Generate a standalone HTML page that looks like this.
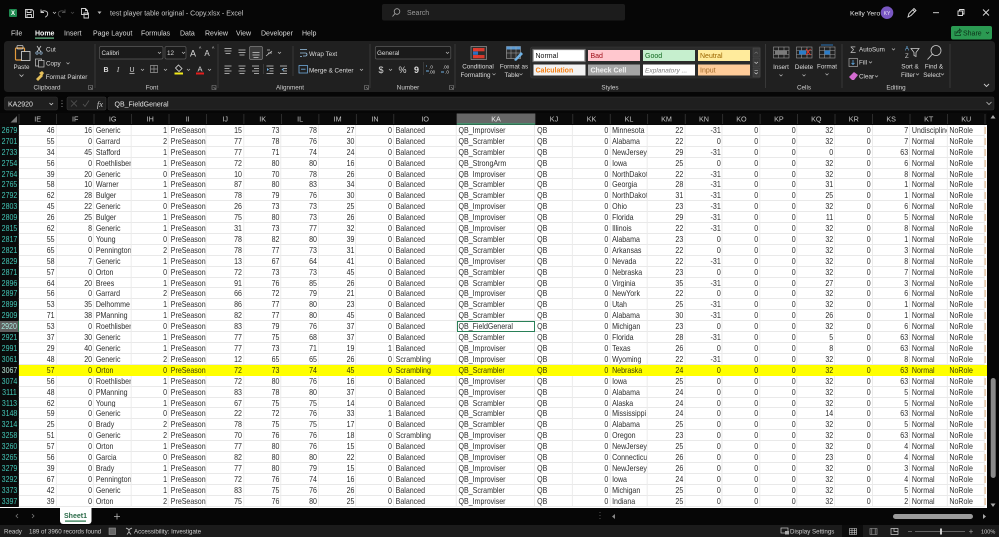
<!DOCTYPE html>
<html><head><meta charset="utf-8"><title>test player table original - Copy.xlsx - Excel</title>
<style>
html,body{margin:0;padding:0;width:999px;height:537px;overflow:hidden;background:#060606}
svg{position:absolute;left:0;top:0}
svg text{font-family:"Liberation Sans",sans-serif;fill:#dcdcdc;font-size:6.3px}
.c{text-anchor:middle}
.h{font-size:7.2px;fill:#c4c4c4;text-anchor:middle}
#wrap{position:absolute;left:0;top:124.9px;width:987px;height:383.5px;overflow:hidden;background:#fff}
table{display:block;border:0;border-spacing:0;width:1148px;transform:scaleX(.86);transform-origin:0 0;font:8.2px/12.2px "Liberation Sans",sans-serif;color:#2c2c2c}
tbody{display:block}
tr{display:grid;height:10.92px;grid-template-columns:22.09px repeat(10,43.58px) 73.14px 91.4px repeat(12,43.58px) 4px;}
tr::after{content:"";display:block;background:linear-gradient(#fff 2px,#dca56c 2px,#dca56c 9px,#fff 9px) 0 0/1.2px 100% no-repeat}
td{display:block;padding:0 1.2px;box-sizing:border-box;text-align:right;white-space:nowrap;overflow:hidden;height:10.92px;border-right:1px solid #e9e9e9;border-bottom:1px solid #e9e9e9}
td:first-child{background:#0a0a0a;color:#43c6b6;text-align:center;border:0;padding:0}
td:nth-child(4),td:nth-child(6),td:nth-child(12),td:nth-child(13),td:nth-child(14),td:nth-child(16),td:nth-child(24),td:nth-child(25){text-align:left;padding-left:2.2px;padding-right:0}
tr.y{background:#ff0;color:#3a3a00}
tr.y td{border-color:#ff0}
tr.y td:first-child{color:#b9e8d8}
tr.y::after{background:none}
tr.s td:first-child{background:#5f5f5f;color:#a8ece0;border-right:1px solid #217346}
#sel{position:absolute;left:456.6px;top:320.8px;width:78.6px;height:11.4px;box-sizing:border-box;border:1.2px solid #2a8058}
</style></head><body>
<svg width="999" height="537" viewBox="0 0 999 537">
<rect width="999" height="537" fill="#060606"/>
<!-- title bar -->
<rect x="9" y="9" width="8" height="8" rx="1" fill="#1e8a50"/><text x="13" y="15.2" class="c" style="font-size:6px;font-weight:bold;fill:#fff">X</text>
<g fill="none" stroke="#cfcfcf" stroke-width=".9">
<path d="M25.500 9.500h6.500l1.500 1.500v6.500h-8zM27 9.500v3h4v-3M27 17.500v-3h4.500v3"/>
<path d="M41 9.500v3h3M41.200 12.300c2-2.500 6.500-1.500 6.500 1.500 0 1.500-1 2.600-2.500 3.400"/>
<path d="M53 12l1.500 1.500 1.500-1.500" stroke-width=".7"/>
<path d="M65 9.500v3h-3M64.800 12.300c-2-2.500-6.500-1.500-6.500 1.500 0 1.500 1 2.600 2.500 3.400" stroke="#4d4d4d"/>
<path d="M71 12l1.500 1.500 1.500-1.500" stroke="#4d4d4d" stroke-width=".7"/>
<path d="M81.500 8.500h4l2 2v4h-6zM85.500 8.500v2h2M84 13h4.500v5H84z"/>
</g>
<path d="M97.500 11.500h4l-2 2.500z" fill="#bbb"/>
<text x="110" y="15.500" style="font-size:7px;fill:#c8c8c8">test player table original - Copy.xlsx  -  Excel</text>
<rect x="382" y="4" width="243" height="16.500" rx="2" fill="#1c1c1c"/>
<circle cx="397" cy="11.500" r="2.800" fill="none" stroke="#aaa" stroke-width=".8"/><path d="M395 13.500l-2.500 3" stroke="#aaa" stroke-width=".8"/>
<text x="407" y="15" style="font-size:7px;fill:#9a9a9a">Search</text>
<text x="850" y="15.500" style="font-size:6.800px;fill:#e4e4e4">Kelly Yero</text>
<circle cx="887" cy="12.700" r="6.300" fill="#7957c2"/><text x="887" y="14.800" class="c" style="font-size:5px;fill:#e6e0f5">KY</text>
<path d="M908 17l1-3.500 5-5 2 2-5 5zM912.500 9.500l2 2" fill="none" stroke="#ddd" stroke-width=".9"/>
<path d="M933 12.700h6" stroke="#ddd" stroke-width=".9"/>
<path d="M958 11h4.500v4.500H958zM959.500 11V9.500h4.500V14h-1.500" fill="none" stroke="#ddd" stroke-width=".9"/>
<path d="M983 9.500l6 6M989 9.500l-6 6" stroke="#ddd" stroke-width=".9"/>
<!-- tabs -->
<g style="font-size:7px">
<text x="11" y="35.500" style="font-size:7px">File</text>
<text x="35" y="35.500" style="font-size:7px;font-weight:bold;fill:#fff">Home</text>
<text x="64" y="35.500" style="font-size:7px">Insert</text>
<text x="93" y="35.500" style="font-size:7px">Page Layout</text>
<text x="141" y="35.500" style="font-size:7px">Formulas</text>
<text x="180" y="35.500" style="font-size:7px">Data</text>
<text x="205" y="35.500" style="font-size:7px">Review</text>
<text x="236" y="35.500" style="font-size:7px">View</text>
<text x="261" y="35.500" style="font-size:7px">Developer</text>
<text x="302" y="35.500" style="font-size:7px">Help</text>
</g>
<rect x="35" y="37.500" width="19" height="1.200" fill="#6fc28f"/>
<rect x="951" y="26" width="41" height="13.500" rx="2" fill="#2b9a52"/>
<path d="M955 31v4.500h5.500v-1.500M956.500 33c.4-1.600 1.500-2.500 3-2.500V29l2 2-2 2v-1.200c-1.500 0-2.200.4-3 1.200z" fill="none" stroke="#0f3a1f" stroke-width=".7"/>
<text x="963" y="35.500" style="font-size:7px;fill:#0c2f18">Share</text>
<path d="M986 32l1.500 1.500 1.500-1.500" fill="none" stroke="#0f3a1f" stroke-width=".8"/>
<!-- ribbon panel -->
<rect x="4" y="41" width="991" height="51" rx="3.500" fill="#202020"/>
<g stroke="#3f3f3f" stroke-width=".8">
<path d="M95 44v44M218 44v44M370 44v44M455 44v44M765.500 44v44M842 44v44M950 44v44"/>
<path d="M293 46v30"/><path d="M423.500 62v13"/><path d="M263.500 64v10"/>
</g>
<!-- clipboard -->
<rect x="15.500" y="48" width="9" height="12" rx="1" fill="none" stroke="#e29a3c" stroke-width="1.200"/>
<rect x="17" y="45.500" width="6" height="3.500" rx="1" fill="none" stroke="#ccc" stroke-width=".8"/>
<rect x="21.500" y="51.500" width="8.500" height="9" fill="#202020" stroke="#ddd" stroke-width=".8"/>
<text x="21.500" y="69" class="c">Paste</text>
<path d="M19.500 74.500l2 2 2-2" fill="none" stroke="#bbb" stroke-width=".8"/>
<path d="M37 46l4 6M41 46l-4 6" stroke="#ccc" stroke-width=".8"/><circle cx="37" cy="53" r="1.200" fill="none" stroke="#9fc4e4" stroke-width=".7"/><circle cx="41" cy="53" r="1.200" fill="none" stroke="#9fc4e4" stroke-width=".7"/>
<text x="46" y="51.500">Cut</text>
<rect x="35.500" y="59" width="6" height="7" fill="none" stroke="#ccc" stroke-width=".7"/><rect x="38.500" y="60.500" width="5.500" height="6.500" fill="#202020" stroke="#ccc" stroke-width=".7"/>
<text x="46" y="65.300">Copy</text><path d="M66.500 62.500l1.500 1.500 1.500-1.500" fill="none" stroke="#bbb" stroke-width=".7"/>
<path d="M36 79l5-5 2 2-5 5zM39 73l3-2 2 2-2 3z" fill="#e4bf5a"/>
<text x="45.700" y="79">Format Painter</text>
<text x="47" y="89.500" class="c" style="fill:#cfcfcf">Clipboard</text>
<path d="M88.500 85.500h4v4h-4zM90 87l2 2" fill="none" stroke="#888" stroke-width=".6"/>
<!-- font -->
<g fill="#1a1a1a" stroke="#5a5a5a" stroke-width=".7">
<rect x="99.500" y="46.500" width="63.500" height="12.500" rx="1.500"/><rect x="165" y="46.500" width="21" height="12.500" rx="1.500"/>
<rect x="375.300" y="46.500" width="75.500" height="12.500" rx="1.500"/>
</g>
<text x="101.500" y="55">Calibri</text><text x="167" y="55">12</text><text x="377" y="55">General</text>
<g fill="none" stroke="#bbb" stroke-width=".7"><path d="M158 52l1.500 1.500 1.500-1.500M182 52l1.500 1.500 1.500-1.500M446 52l1.500 1.500 1.500-1.500"/></g>
<text x="193" y="56.500" class="c" style="font-size:9px">A</text><text x="199" y="50.500" style="font-size:5px">^</text>
<text x="207" y="56" class="c" style="font-size:8px">A</text><text x="212" y="50.500" style="font-size:5px">^</text>
<text x="106" y="72" class="c" style="font-size:7px;font-weight:bold">B</text>
<text x="118" y="72" class="c" style="font-size:7px;font-style:italic;font-family:'Liberation Serif',serif">I</text>
<text x="132" y="72" class="c" style="font-size:7px;text-decoration:underline">U</text>
<path d="M141 69l1.500 1.500 1.500-1.500M164 69l1.500 1.500 1.500-1.500M187 69l1.500 1.500 1.500-1.500M208 69l1.500 1.500 1.500-1.500" fill="none" stroke="#bbb" stroke-width=".7"/>
<path d="M150.500 65.500h7v7h-7zM154 65.500v7M150.500 69h7" fill="none" stroke="#999" stroke-width=".7"/>
<path d="M178.500 65l3.500 3.500-3 3-3.500-3.500z" fill="none" stroke="#ddd" stroke-width=".8"/>
<rect x="174.500" y="72.500" width="8.500" height="2" fill="#f2ea1a"/>
<text x="200" y="71.500" class="c" style="font-size:7.500px">A</text>
<rect x="196" y="72.500" width="8" height="2" fill="#e31d1d"/>
<text x="152" y="89.500" class="c" style="fill:#cfcfcf">Font</text>
<path d="M212 85.500h4v4h-4zM213.500 87l2 2" fill="none" stroke="#888" stroke-width=".6"/>
<!-- alignment -->
<rect x="249.500" y="46.500" width="13" height="13" rx="1.500" fill="#3a3a3a" stroke="#808080" stroke-width=".7"/>
<g stroke="#d0d0d0" stroke-width=".8" fill="none">
<path d="M224.500 48.500h7M224.500 51h7M225.500 53.500h5"/>
<path d="M238.500 50h7M238.500 52.500h7M239.500 55h5"/>
<path d="M252.500 52.500h7M252.500 55h7M253.500 57.500h5"/>
<path d="M266 56l6-5M267 50h3M268 53h4" stroke="#c8c8c8"/>
<path d="M224.500 66h7M224.500 68.500h5M224.500 71h7M224.500 73.500h5"/>
<path d="M238.500 66h7M239.500 68.500h5M238.500 71h7M239.500 73.500h5"/>
<path d="M252 66h7M254 68.500h5M252 71h7M254 73.500h5"/>
<path d="M266.500 66h7M269.500 68.500h4M269.500 71h4M266.500 73.500h7"/>
<path d="M280 66h7M283 68.500h4M283 71h4M280 73.500h7"/>
</g>
<path d="M278 52l1.500 1.500 1.500-1.500" fill="none" stroke="#bbb" stroke-width=".7"/>
<path d="M267 68l2 1.500-2 1.500zM283.500 68l-2 1.500 2 1.500z" fill="#6fb2e6"/>
<path d="M300 49.500h7M300 53h5.500a1.500 1.500 0 0 1 0 3H303M300 56.500h2" fill="none" stroke="#9ac3e4" stroke-width=".8"/>
<text x="309" y="55.800">Wrap Text</text>
<rect x="299" y="65.500" width="8.500" height="7.500" fill="none" stroke="#6fa8d8" stroke-width=".8"/><path d="M301 69.200h4.500" stroke="#6fa8d8" stroke-width=".9"/>
<text x="309" y="72.300">Merge &amp; Center</text>
<path d="M360 69l1.500 1.500 1.500-1.500" fill="none" stroke="#bbb" stroke-width=".7"/>
<text x="290" y="89.500" class="c" style="fill:#cfcfcf">Alignment</text>
<path d="M364.500 85.500h4v4h-4zM366 87l2 2M449.500 85.500h4v4h-4zM451 87l2 2" fill="none" stroke="#888" stroke-width=".6"/>
<!-- number -->
<text x="381" y="73" class="c" style="font-size:9px">$</text>
<path d="M389 69l1.500 1.500 1.500-1.500" fill="none" stroke="#bbb" stroke-width=".7"/>
<text x="402.500" y="73" class="c" style="font-size:9px">%</text>
<text x="416.500" y="73" class="c" style="font-size:9px;font-weight:bold">9</text>
<text x="431" y="68.500" class="c" style="font-size:4.500px">.0</text><text x="432" y="73.500" class="c" style="font-size:4.500px">.00</text>
<text x="446" y="68.500" class="c" style="font-size:4.500px">.00</text><text x="447" y="73.500" class="c" style="font-size:4.500px">.0</text>
<path d="M427 66h-1M429 71h-3M441 72h3" stroke="#6fb2e6" stroke-width=".9"/>
<text x="408" y="89.500" class="c" style="fill:#cfcfcf">Number</text>
<!-- conditional / table -->
<rect x="471" y="46.500" width="15.500" height="13" fill="#2d2d2d" stroke="#aaa" stroke-width=".6"/>
<rect x="473" y="48" width="5" height="3.300" fill="#e03a2e"/><rect x="478" y="48" width="6.500" height="3.300" fill="#d8392d"/><rect x="473" y="51.500" width="5" height="3.300" fill="#2b6fc4"/><rect x="473" y="55" width="5" height="3.300" fill="#e03a2e"/><rect x="478" y="55" width="6.500" height="3.300" fill="#d8392d"/>
<text x="478" y="68.500" class="c">Conditional</text><text x="475.500" y="77" class="c">Formatting</text>
<path d="M492.500 73.500l1.500 1.500 1.500-1.500" fill="none" stroke="#bbb" stroke-width=".6"/>
<rect x="506.500" y="46.500" width="14" height="12" fill="#2d2d2d" stroke="#aaa" stroke-width=".6"/>
<rect x="506.500" y="46.500" width="14" height="3" fill="#5b9bd5"/>
<path d="M511 46.500v12M516 46.500v12M506.500 53h14" stroke="#aaa" stroke-width=".5"/>
<path d="M514 60l7-8 2 2-7 7z" fill="#6fb2e6"/>
<text x="514" y="68.500" class="c">Format as</text><text x="512" y="77" class="c">Table</text>
<path d="M519.500 73.500l1.500 1.500 1.500-1.500" fill="none" stroke="#bbb" stroke-width=".6"/>
<!-- styles -->
<rect x="530.500" y="47" width="230" height="31" rx="2" fill="#2b2b2b" stroke="#3a3a3a" stroke-width=".6"/>
<rect x="533" y="49.500" width="52" height="12" fill="#fff" stroke="#777" stroke-width="1.200"/>
<rect x="588" y="50" width="52" height="11" fill="#ffc7ce"/>
<rect x="643" y="50" width="52" height="11" fill="#c6efce"/>
<rect x="698" y="50" width="52" height="11" fill="#ffeb9c"/>
<rect x="533.500" y="64.500" width="52" height="11" fill="#f2f2f2"/>
<rect x="588" y="64.500" width="52" height="11" fill="#a5a5a5"/>
<rect x="643" y="64.500" width="52" height="11" fill="#fff"/>
<rect x="698" y="64.500" width="52" height="11" fill="#fc9"/>
<text x="535.500" y="58" style="font-size:7px;fill:#111">Normal</text>
<text x="590.500" y="58" style="font-size:7px;fill:#a0101a">Bad</text>
<text x="645" y="58" style="font-size:7px;fill:#11691f">Good</text>
<text x="700" y="58" style="font-size:7px;fill:#9c6500">Neutral</text>
<text x="535.500" y="72.500" style="font-size:7px;fill:#f57e10;font-weight:bold">Calculation</text>
<text x="590.500" y="72.500" style="font-size:7px;fill:#f2f2f2;font-weight:bold">Check Cell</text>
<text x="645" y="72.500" style="font-size:6.600px;fill:#7f7f7f;font-style:italic">Explanatory ...</text>
<text x="700" y="72.500" style="font-size:7px;fill:#a06a2a">Input</text>
<g fill="#3a3a3a" stroke="#555" stroke-width=".4"><rect x="753" y="48" width="6.500" height="9"/><rect x="753" y="58" width="6.500" height="9"/><rect x="753" y="68" width="6.500" height="9"/></g>
<path d="M754.500 53.500l1.700-1.500 1.700 1.500" fill="none" stroke="#777" stroke-width=".6"/>
<path d="M754.500 62l1.700 1.500 1.700-1.500M754.500 72.500l1.700 1.500 1.700-1.500M754.500 70.500h3.400" fill="none" stroke="#ddd" stroke-width=".6"/>
<text x="610" y="89.500" class="c" style="fill:#cfcfcf">Styles</text>
<!-- cells -->
<g fill="none" stroke="#9a9a9a" stroke-width=".6">
<rect x="773.500" y="47" width="15.500" height="11"/><path d="M773.500 50.500h15.500M773.500 54.500h15.500M778.500 47v11M784 47v11"/>
<rect x="796.500" y="47" width="15.500" height="11"/><path d="M796.500 50.500h15.500M796.500 54.500h15.500M801.500 47v11M807 47v11"/>
<rect x="819.500" y="47" width="15.500" height="11"/><path d="M819.500 50.500h15.500M819.500 54.500h15.500M824.500 47v11M830 47v11"/>
</g>
<rect x="775" y="50.500" width="12" height="4" fill="#7a7a7a"/>
<rect x="799" y="50.500" width="7" height="4" fill="#2b7cc8"/><path d="M806 49l4.500 6M810.500 49l-4.500 6" stroke="#e0352c" stroke-width="1"/>
<rect x="824.500" y="50.500" width="5.500" height="4" fill="#2b7cc8"/><path d="M821 45h12" stroke="#2b7cc8" stroke-width=".9"/>
<text x="781" y="69" class="c">Insert</text><text x="804" y="69" class="c">Delete</text><text x="827" y="68.500" class="c">Format</text>
<path d="M779.500 74.500l1.500 1.500 1.500-1.500M802.500 74.500l1.500 1.500 1.500-1.500M825.500 73.500l1.500 1.500 1.500-1.500" fill="none" stroke="#bbb" stroke-width=".7"/>
<text x="804" y="89.500" class="c" style="fill:#cfcfcf">Cells</text>
<!-- editing -->
<text x="853" y="53" class="c" style="font-size:9.500px;fill:#bbb">Σ</text>
<text x="859" y="51.500">AutoSum</text><path d="M892 48.500l1.500 1.500 1.500-1.500" fill="none" stroke="#bbb" stroke-width=".7"/>
<rect x="849" y="58.500" width="8.500" height="8" fill="none" stroke="#aaa" stroke-width=".7"/><path d="M853 60v4.500M851.500 63l1.500 1.500 1.500-1.500" fill="none" stroke="#5fa8e0" stroke-width=".8"/>
<text x="859" y="64.500">Fill</text><path d="M869 61.500l1.500 1.500 1.500-1.500" fill="none" stroke="#bbb" stroke-width=".7"/>
<path d="M849 77l5-5 4 3-4 5h-2z" fill="#d36bd0"/>
<text x="859" y="78.500">Clear</text><path d="M875 75.500l1.500 1.500 1.500-1.500" fill="none" stroke="#bbb" stroke-width=".7"/>
<text x="905" y="50.500" style="font-size:6px;fill:#6fb2e6">A</text><text x="905" y="58" style="font-size:6px;fill:#ccc">Z</text>
<path d="M911 48.500h8l-3 4v4l-2-1v-3z" fill="none" stroke="#ccc" stroke-width=".8"/>
<text x="910" y="68.500" class="c">Sort &amp;</text><text x="908" y="77" class="c">Filter</text><path d="M916 73.500l1.500 1.500 1.500-1.500" fill="none" stroke="#bbb" stroke-width=".7"/>
<circle cx="936" cy="50.500" r="5" fill="none" stroke="#ccc" stroke-width=".8"/><path d="M932.500 54l-5 5.500" stroke="#ccc" stroke-width=".9"/>
<text x="934" y="68.500" class="c">Find &amp;</text><text x="932" y="77" class="c">Select</text><path d="M941 73.500l1.500 1.500 1.500-1.500" fill="none" stroke="#bbb" stroke-width=".7"/>
<text x="896" y="89.500" class="c" style="fill:#cfcfcf">Editing</text>
<path d="M984 84l2.500 2.500L989 84" fill="none" stroke="#ccc" stroke-width=".9"/>
<!-- formula bar -->
<rect x="4.500" y="97" width="53" height="13" rx="1.500" fill="#1f1f1f" stroke="#333" stroke-width=".5"/>
<text x="8" y="106.300" style="font-size:7px;fill:#e4e4e4">KA2920</text>
<path d="M49.500 103l1.800 1.800 1.800-1.800" fill="none" stroke="#ccc" stroke-width=".8"/>
<path d="M62 100.500v.8M62 103.300v.8M62 106v.8" stroke="#bbb" stroke-width=".9"/>
<rect x="67" y="97" width="39" height="13" rx="1.500" fill="#1f1f1f" stroke="#3a3a3a" stroke-width=".5"/>
<path d="M71 100.500l6 6M77 100.500l-6 6M83 104l2 2.500 4-6" fill="none" stroke="#555" stroke-width=".8"/>
<text x="100" y="107" class="c" style="font-family:'Liberation Serif',serif;font-style:italic;font-size:8.500px;fill:#ccc">fx</text>
<rect x="108" y="97" width="886" height="13" rx="1.500" fill="#1f1f1f" stroke="#333" stroke-width=".5"/>
<text x="114.500" y="106.300" style="font-size:7px;fill:#e4e4e4">QB_FieldGeneral</text>
<path d="M986.500 102l2.500 2.500 2.500-2.500" fill="none" stroke="#bbb" stroke-width=".8"/>
<!-- column headers -->
<rect x="0" y="113" width="987" height="11.500" fill="#0a0a0a"/>
<path d="M17 116v6.500h-6.500z" fill="#777"/>
<rect x="456.700" y="113.500" width="78.600" height="10.500" fill="#666"/>
<rect x="456.700" y="123.300" width="78.600" height="1.400" fill="#3f9f72"/>
<g stroke="#3c3c3c" stroke-width=".7"><path d="M19 114v10M56.500 114v10M94 114v10M131.500 114v10M169 114v10M206.500 114v10M243.900 114v10M281.400 114v10M318.900 114v10M356.300 114v10M393.800 114v10M456.700 114v10M535.300 114v10M572.800 114v10M610.200 114v10M647.700 114v10M685.200 114v10M722.700 114v10M760.100 114v10M797.600 114v10M835 114v10M872.500 114v10M910 114v10M947.400 114v10M985 114v10"/></g>
<g>
<text x="37.700" y="121.300" class="h">IE</text><text x="75.200" y="121.300" class="h">IF</text><text x="112.700" y="121.300" class="h">IG</text><text x="150.200" y="121.300" class="h">IH</text><text x="187.700" y="121.300" class="h">II</text><text x="225.200" y="121.300" class="h">IJ</text><text x="262.700" y="121.300" class="h">IK</text><text x="300.100" y="121.300" class="h">IL</text><text x="337.600" y="121.300" class="h">IM</text><text x="375" y="121.300" class="h">IN</text><text x="425.200" y="121.300" class="h">IO</text>
<text x="496" y="121.300" class="h" style="fill:#eee">KA</text>
<text x="554" y="121.300" class="h">KJ</text><text x="591.500" y="121.300" class="h">KK</text><text x="629" y="121.300" class="h">KL</text><text x="666.500" y="121.300" class="h">KM</text><text x="704" y="121.300" class="h">KN</text><text x="741.400" y="121.300" class="h">KO</text><text x="778.900" y="121.300" class="h">KP</text><text x="816.300" y="121.300" class="h">KQ</text><text x="853.800" y="121.300" class="h">KR</text><text x="891.200" y="121.300" class="h">KS</text><text x="928.700" y="121.300" class="h">KT</text><text x="966.200" y="121.300" class="h">KU</text>
</g>
<!-- vertical scrollbar -->
<path d="M993 115l2.500 3.500h-5z" fill="#aaa"/><path d="M990.500 503.500h5L993 507z" fill="#aaa"/>
<rect x="990.700" y="378" width="5" height="100" rx="2.500" fill="#8a8a8a"/>
<!-- sheet tabs -->
<path d="M18 514l-2 2 2 2M32 514l2 2-2 2" fill="none" stroke="#777" stroke-width=".8"/>
<path d="M60 508h31.500v13a3 3 0 0 1-3 3H63a3 3 0 0 1-3-3z" fill="#fff"/>
<text x="75.500" y="518" class="c" style="font-size:7px;font-weight:bold;fill:#2a6a48">Sheet1</text>
<rect x="65" y="520.500" width="21" height="1.200" fill="#217346"/>
<path d="M117 513.500v6M114 516.500h6" stroke="#bbb" stroke-width=".8"/>
<path d="M600 512v.8M600 515v.8M600 518v.8" stroke="#888" stroke-width=".8"/>
<path d="M615 514v5l-3-2.500z" fill="#888"/><path d="M983 514v5l3-2.500z" fill="#aaa"/>
<rect x="893" y="514" width="80" height="5" rx="2.500" fill="#9a9a9a"/>
<!-- status bar -->
<rect x="0" y="525" width="999" height="12" fill="#1b1b1b"/>
<rect x="842" y="525" width="21" height="12" fill="#0c0c0c"/>
<text x="4" y="533.500" style="font-size:6.200px;fill:#cfcfcf">Ready</text>
<text x="29" y="533.500" style="font-size:6.200px;fill:#cfcfcf">189 of 3960 records found</text>
<rect x="109" y="528" width="6.500" height="6.500" fill="#666" stroke="#aaa" stroke-width=".5"/>
<path d="M126 528l3 1.500 3-1.500M129 529.500v2.500l-2 2.500M129 532l2 2.500" fill="none" stroke="#ccc" stroke-width=".8"/>
<text x="134" y="533.500" style="font-size:6.200px;fill:#cfcfcf">Accessibility: Investigate</text>
<rect x="781" y="528" width="7" height="5" fill="none" stroke="#ccc" stroke-width=".7"/><rect x="785" y="531" width="4" height="3.500" fill="#aaa"/>
<text x="790" y="533.500" style="font-size:6.200px;fill:#cfcfcf">Display Settings</text>
<path d="M849.500 528.500h7v6h-7zM849.500 530.500h7M849.500 532.500h7M852 528.500v6M854.300 528.500v6" fill="none" stroke="#ddd" stroke-width=".6"/>
<path d="M870 528.500h7v6h-7zM871.800 528.500v6M875.200 528.500v6" fill="none" stroke="#aaa" stroke-width=".6"/>
<path d="M891 528.500h7v6h-7zM894 528.500v3h4" fill="none" stroke="#ccc" stroke-width=".7"/>
<path d="M908 531.500h4M915 531.500h50M969 531.500h4M971 529.500v4" stroke="#aaa" stroke-width=".6"/>
<rect x="940" y="528.500" width="2" height="6" fill="#ccc"/>
<text x="981" y="533.500" style="font-size:5.600px;fill:#cfcfcf">100%</text>
</svg>
<div id="wrap"><table><tbody>
<tr><td>2679<td>46<td>16<td>Generic<td>1<td>PreSeason<td>15<td>73<td>78<td>27<td>0<td>Balanced<td>QB_Improviser<td>QB<td>0<td>Minnesota<td>22<td>-31<td>0<td>0<td>32<td>0<td>7<td>Undisciplined<td>NoRole
<tr><td>2701<td>55<td>0<td>Garrard<td>2<td>PreSeason<td>77<td>78<td>76<td>30<td>0<td>Balanced<td>QB_Scrambler<td>QB<td>0<td>Alabama<td>22<td>0<td>0<td>0<td>32<td>0<td>7<td>Normal<td>NoRole
<tr><td>2733<td>34<td>45<td>Stafford<td>1<td>PreSeason<td>77<td>71<td>74<td>24<td>0<td>Balanced<td>QB_Scrambler<td>QB<td>0<td>NewJersey<td>29<td>-31<td>0<td>0<td>0<td>0<td>63<td>Normal<td>NoRole
<tr><td>2754<td>56<td>0<td>Roethlisberger<td>1<td>PreSeason<td>72<td>80<td>80<td>16<td>0<td>Balanced<td>QB_StrongArm<td>QB<td>0<td>Iowa<td>25<td>0<td>0<td>0<td>32<td>0<td>6<td>Normal<td>NoRole
<tr><td>2764<td>39<td>20<td>Generic<td>0<td>PreSeason<td>10<td>70<td>78<td>26<td>0<td>Balanced<td>QB_Improviser<td>QB<td>0<td>NorthDakota<td>22<td>-31<td>0<td>0<td>32<td>0<td>8<td>Normal<td>NoRole
<tr><td>2765<td>58<td>10<td>Warner<td>1<td>PreSeason<td>87<td>80<td>83<td>34<td>0<td>Balanced<td>QB_Scrambler<td>QB<td>0<td>Georgia<td>28<td>-31<td>0<td>0<td>31<td>0<td>1<td>Normal<td>NoRole
<tr><td>2792<td>62<td>28<td>Bulger<td>1<td>PreSeason<td>78<td>79<td>76<td>30<td>0<td>Balanced<td>QB_Scrambler<td>QB<td>0<td>NorthDakota<td>31<td>-31<td>0<td>0<td>25<td>0<td>1<td>Normal<td>NoRole
<tr><td>2803<td>45<td>22<td>Generic<td>0<td>PreSeason<td>26<td>73<td>73<td>25<td>0<td>Balanced<td>QB_Improviser<td>QB<td>0<td>Ohio<td>23<td>-31<td>0<td>0<td>32<td>0<td>6<td>Normal<td>NoRole
<tr><td>2809<td>26<td>25<td>Bulger<td>1<td>PreSeason<td>75<td>80<td>73<td>26<td>0<td>Balanced<td>QB_Improviser<td>QB<td>0<td>Florida<td>29<td>-31<td>0<td>0<td>11<td>0<td>5<td>Normal<td>NoRole
<tr><td>2815<td>62<td>8<td>Generic<td>1<td>PreSeason<td>31<td>73<td>77<td>32<td>0<td>Balanced<td>QB_Improviser<td>QB<td>0<td>Illinois<td>22<td>-31<td>0<td>0<td>32<td>0<td>8<td>Normal<td>NoRole
<tr><td>2817<td>55<td>0<td>Young<td>0<td>PreSeason<td>78<td>82<td>80<td>39<td>0<td>Balanced<td>QB_Scrambler<td>QB<td>0<td>Alabama<td>23<td>0<td>0<td>0<td>32<td>0<td>1<td>Normal<td>NoRole
<tr><td>2821<td>65<td>0<td>Pennington<td>2<td>PreSeason<td>78<td>77<td>73<td>31<td>0<td>Balanced<td>QB_Scrambler<td>QB<td>0<td>Arkansas<td>22<td>0<td>0<td>0<td>32<td>0<td>3<td>Normal<td>NoRole
<tr><td>2829<td>58<td>7<td>Generic<td>1<td>PreSeason<td>13<td>67<td>64<td>41<td>0<td>Balanced<td>QB_Improviser<td>QB<td>0<td>Nevada<td>22<td>-31<td>0<td>0<td>32<td>0<td>8<td>Normal<td>NoRole
<tr><td>2871<td>57<td>0<td>Orton<td>0<td>PreSeason<td>72<td>73<td>73<td>45<td>0<td>Balanced<td>QB_Scrambler<td>QB<td>0<td>Nebraska<td>23<td>0<td>0<td>0<td>32<td>0<td>7<td>Normal<td>NoRole
<tr><td>2896<td>64<td>20<td>Brees<td>1<td>PreSeason<td>91<td>76<td>85<td>26<td>0<td>Balanced<td>QB_Scrambler<td>QB<td>0<td>Virginia<td>35<td>-31<td>0<td>0<td>27<td>0<td>3<td>Normal<td>NoRole
<tr><td>2897<td>56<td>0<td>Garrard<td>2<td>PreSeason<td>66<td>72<td>79<td>21<td>0<td>Balanced<td>QB_Improviser<td>QB<td>0<td>NewYork<td>22<td>0<td>0<td>0<td>32<td>0<td>6<td>Normal<td>NoRole
<tr><td>2899<td>53<td>35<td>Delhomme<td>1<td>PreSeason<td>86<td>77<td>80<td>23<td>0<td>Balanced<td>QB_Scrambler<td>QB<td>0<td>Utah<td>25<td>-31<td>0<td>0<td>32<td>0<td>1<td>Normal<td>NoRole
<tr><td>2909<td>71<td>38<td>PManning<td>1<td>PreSeason<td>82<td>77<td>80<td>45<td>0<td>Balanced<td>QB_Scrambler<td>QB<td>0<td>Alabama<td>30<td>-31<td>0<td>0<td>26<td>0<td>1<td>Normal<td>NoRole
<tr class="s"><td>2920<td>53<td>0<td>Roethlisberger<td>0<td>PreSeason<td>83<td>79<td>76<td>37<td>0<td>Balanced<td>QB_FieldGeneral<td>QB<td>0<td>Michigan<td>23<td>0<td>0<td>0<td>32<td>0<td>6<td>Normal<td>NoRole
<tr><td>2921<td>37<td>30<td>Generic<td>1<td>PreSeason<td>77<td>75<td>68<td>37<td>0<td>Balanced<td>QB_Scrambler<td>QB<td>0<td>Florida<td>28<td>-31<td>0<td>0<td>5<td>0<td>63<td>Normal<td>NoRole
<tr><td>2991<td>29<td>40<td>Generic<td>1<td>PreSeason<td>77<td>73<td>71<td>19<td>1<td>Balanced<td>QB_Improviser<td>QB<td>0<td>Texas<td>26<td>0<td>0<td>0<td>8<td>0<td>63<td>Normal<td>NoRole
<tr><td>3061<td>48<td>20<td>Generic<td>2<td>PreSeason<td>12<td>65<td>65<td>26<td>0<td>Scrambling<td>QB_Improviser<td>QB<td>0<td>Wyoming<td>22<td>-31<td>0<td>0<td>32<td>0<td>8<td>Normal<td>NoRole
<tr class="y"><td>3067<td>57<td>0<td>Orton<td>0<td>PreSeason<td>72<td>73<td>74<td>45<td>0<td>Scrambling<td>QB_Scrambler<td>QB<td>0<td>Nebraska<td>24<td>0<td>0<td>0<td>32<td>0<td>63<td>Normal<td>NoRole
<tr><td>3074<td>56<td>0<td>Roethlisberger<td>1<td>PreSeason<td>72<td>80<td>76<td>16<td>0<td>Balanced<td>QB_Improviser<td>QB<td>0<td>Iowa<td>25<td>0<td>0<td>0<td>32<td>0<td>63<td>Normal<td>NoRole
<tr><td>3111<td>48<td>0<td>PManning<td>0<td>PreSeason<td>83<td>78<td>80<td>37<td>0<td>Balanced<td>QB_Improviser<td>QB<td>0<td>Alabama<td>24<td>0<td>0<td>0<td>32<td>0<td>5<td>Normal<td>NoRole
<tr><td>3113<td>62<td>0<td>Young<td>1<td>PreSeason<td>67<td>75<td>75<td>14<td>0<td>Balanced<td>QB_Scrambler<td>QB<td>0<td>Alaska<td>24<td>0<td>0<td>0<td>32<td>0<td>5<td>Normal<td>NoRole
<tr><td>3148<td>59<td>0<td>Generic<td>0<td>PreSeason<td>22<td>72<td>76<td>33<td>1<td>Balanced<td>QB_Scrambler<td>QB<td>0<td>Mississippi<td>24<td>0<td>0<td>0<td>14<td>0<td>63<td>Normal<td>NoRole
<tr><td>3214<td>25<td>0<td>Brady<td>2<td>PreSeason<td>78<td>75<td>75<td>17<td>0<td>Balanced<td>QB_Scrambler<td>QB<td>0<td>Alabama<td>25<td>0<td>0<td>0<td>32<td>0<td>5<td>Normal<td>NoRole
<tr><td>3258<td>51<td>0<td>Generic<td>2<td>PreSeason<td>70<td>76<td>76<td>18<td>0<td>Scrambling<td>QB_Improviser<td>QB<td>0<td>Oregon<td>23<td>0<td>0<td>0<td>32<td>0<td>63<td>Normal<td>NoRole
<tr><td>3260<td>57<td>0<td>Orton<td>1<td>PreSeason<td>77<td>80<td>76<td>15<td>0<td>Balanced<td>QB_Improviser<td>QB<td>0<td>NewJersey<td>25<td>0<td>0<td>0<td>32<td>0<td>4<td>Normal<td>NoRole
<tr><td>3265<td>56<td>0<td>Garcia<td>0<td>PreSeason<td>82<td>80<td>80<td>22<td>0<td>Balanced<td>QB_Improviser<td>QB<td>0<td>Connecticut<td>26<td>0<td>0<td>0<td>23<td>0<td>4<td>Normal<td>NoRole
<tr><td>3279<td>39<td>0<td>Brady<td>1<td>PreSeason<td>77<td>80<td>79<td>15<td>0<td>Balanced<td>QB_Improviser<td>QB<td>0<td>NewJersey<td>26<td>0<td>0<td>0<td>32<td>0<td>3<td>Normal<td>NoRole
<tr><td>3292<td>67<td>0<td>Pennington<td>1<td>PreSeason<td>72<td>76<td>74<td>16<td>0<td>Balanced<td>QB_Improviser<td>QB<td>0<td>Iowa<td>24<td>0<td>0<td>0<td>32<td>0<td>4<td>Normal<td>NoRole
<tr><td>3373<td>42<td>0<td>Generic<td>1<td>PreSeason<td>83<td>75<td>76<td>26<td>0<td>Balanced<td>QB_Scrambler<td>QB<td>0<td>Michigan<td>25<td>0<td>0<td>0<td>32<td>0<td>5<td>Normal<td>NoRole
<tr><td>3397<td>39<td>0<td>Orton<td>2<td>PreSeason<td>75<td>76<td>80<td>25<td>0<td>Balanced<td>QB_Improviser<td>QB<td>0<td>Indiana<td>25<td>0<td>0<td>0<td>32<td>0<td>2<td>Normal<td>NoRole
</tbody></table></div>
<div id="sel"></div>
</body></html>
